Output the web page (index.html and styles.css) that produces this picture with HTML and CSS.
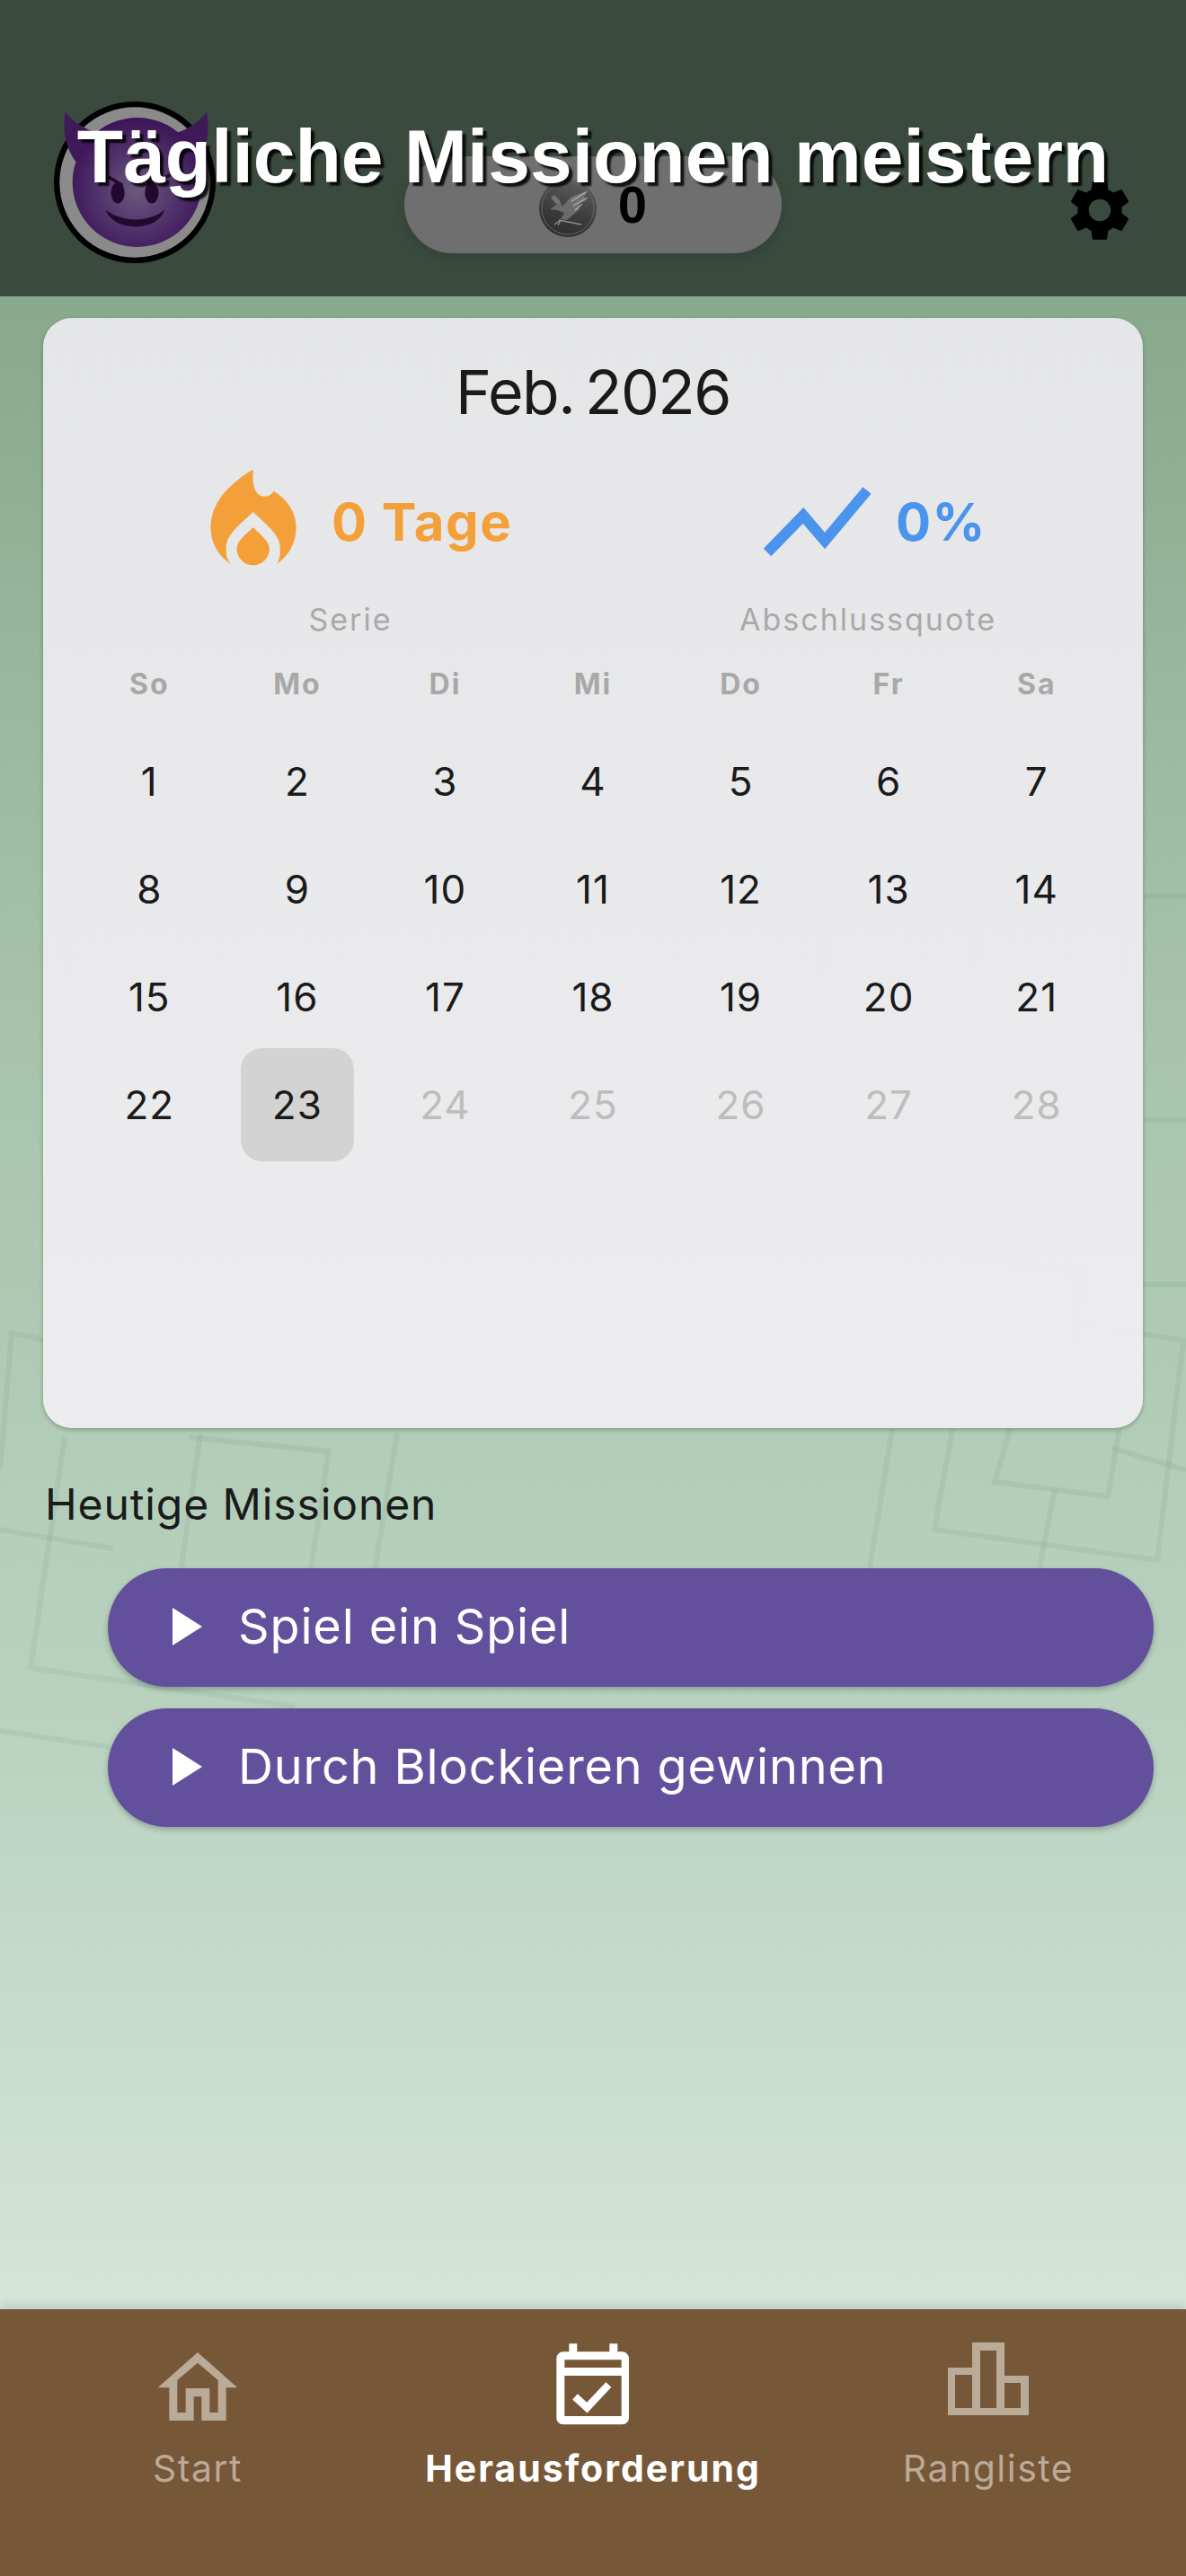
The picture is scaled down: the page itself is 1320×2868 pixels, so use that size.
FILE: index.html
```html
<!DOCTYPE html>
<html lang="de">
<head>
    <meta charset="UTF-8">
    <meta name="viewport" content="width=device-width, initial-scale=1.0">
    <title>Tägliche Missionen meistern</title>
    <link rel="stylesheet" href="styles.css">
</head>
<body>
    <header class="topbar">
        <svg class="avatar" viewBox="0 0 200 200">
            <defs>
                <radialGradient id="faceGlow" cx="50%" cy="56%" r="55%">
                    <stop offset="0" stop-color="#6d5a7c"/>
                    <stop offset="0.55" stop-color="#51336b"/>
                    <stop offset="1" stop-color="#3d1458"/>
                </radialGradient>
            </defs>
            <circle cx="100" cy="100" r="96.5" fill="#8a8a8a" stroke="#000" stroke-width="7"/>
            <path d="M14 13 C10 40 16 66 36 84 L170 84 C188 66 194 40 189 13 C178 28 158 38 146 40 C118 22 88 22 60 40 C46 38 26 28 14 13Z" fill="#3f1a58"/>
            <circle cx="103" cy="100" r="80" fill="url(#faceGlow)"/>
            <ellipse cx="79" cy="113" rx="8.5" ry="13" fill="#24082f"/>
            <ellipse cx="121" cy="113" rx="8.5" ry="13" fill="#24082f"/>
            <path d="M67 93 L85 104 M144 91 L117 102" stroke="#24082f" stroke-width="4" fill="none"/>
            <path d="M64 134 C82 150 120 150 137 134 C128 162 74 162 64 134Z" fill="#24082f"/>
        </svg>
        <div class="coins">
            <svg class="coin" viewBox="0 0 64 64">
                <defs>
                    <linearGradient id="coinShade" x1="0.7" y1="0" x2="0.4" y2="1">
                        <stop offset="0" stop-color="#5f5f5f"/>
                        <stop offset="0.6" stop-color="#3c3c3c"/>
                        <stop offset="1" stop-color="#2e2e2e"/>
                    </linearGradient>
                </defs>
                <circle cx="32" cy="32" r="32" fill="url(#coinShade)"/>
                <circle cx="32" cy="32" r="29" fill="none" stroke="#666" stroke-width="1"/>
                <path d="M12 33 L19 28 L27 29 L36 19 L55 12 L50 19 L52 23 L45 27 L45 33 L38 39 L31 45 L24 44 L28 37 L20 34Z" fill="#8f8f8f" opacity="0.55"/>
                <path d="M13 20 L17 17 L23 23 L25 29 L19 27Z" fill="#9a9a9a" opacity="0.55"/>
                <path d="M36 24 L52 14 M38 29 L54 20 M40 34 L48 27" stroke="#d0d0d0" stroke-width="1.2" opacity="0.7"/>
                <path d="M17 50 L24 45 L21 51 M22 45 L47 50" fill="none" stroke="#a5a5a5" stroke-width="1.4" opacity="0.75"/>
            </svg>
            <span class="coin-count">0</span>
        </div>
        <svg class="settings" viewBox="0 0 24 24">
            <path d="M19.14 12.94c.04-.3.06-.61.06-.94 0-.32-.02-.64-.07-.94l2.03-1.58c.18-.14.23-.41.12-.61l-1.92-3.32c-.12-.22-.37-.29-.59-.22l-2.39.96c-.5-.38-1.03-.7-1.62-.94l-.36-2.54c-.04-.24-.24-.41-.48-.41h-3.84c-.24 0-.43.17-.47.41l-.36 2.54c-.59.24-1.13.57-1.62.94l-2.39-.96c-.22-.08-.47 0-.59.22L2.74 8.87c-.12.21-.08.47.12.61l2.03 1.58c-.05.3-.09.63-.09.94s.02.64.07.94l-2.03 1.58c-.18.14-.23.41-.12.61l1.92 3.32c.12.22.37.29.59.22l2.39-.96c.5.38 1.03.7 1.62.94l.36 2.54c.05.24.24.41.48.41h3.84c.24 0 .44-.17.47-.41l.36-2.54c.59-.24 1.13-.56 1.62-.94l2.39.96c.22.08.47 0 .59-.22l1.92-3.32c.12-.22.07-.47-.12-.61l-2.01-1.58zM12 15.6c-1.98 0-3.6-1.62-3.6-3.6s1.62-3.6 3.6-3.6 3.6 1.62 3.6 3.6-1.62 3.6-3.6 3.6z"/>
        </svg>
        <h1 class="title">Tägliche Missionen meistern</h1>
    </header>

    <main class="content">
        <!-- maze lines behind the page, coordinates are page pixels -->
        <svg class="pattern" viewBox="0 330 1320 2238">
            <g fill="none" stroke="#3c5f48" stroke-opacity="0.07" stroke-width="6">
                <path d="M0 1637 L13 1484 L50 1492"/>
                <path d="M72 1600 L34 1857 L328 1900"/>
                <path d="M210 1600 L366 1616 L345 1753"/>
                <path d="M223 1596 L202 1745"/>
                <path d="M442 1596 L417 1749"/>
                <path d="M0 1703 L126 1724"/>
                <path d="M0 1927 L168 1952"/>
                <path d="M993 1591 L968 1745"/>
                <path d="M1023 1388 L1204 1417 L1188 1590"/>
                <path d="M1060 1591 L1040 1703 L1288 1737 L1317 1492 L1204 1475"/>
                <path d="M1124 1591 L1107 1650 L1233 1666 L1246 1591"/>
                <path d="M1174 1658 L1157 1745"/>
                <path d="M1237 1612 L1320 1637"/>
                <path d="M917 998 V1156 H1023"/>
                <path d="M1086 1015 V1160 H1254 V1015"/>
                <path d="M72 1040 V1200 H180"/>
                <path d="M114 1172 V1264 L210 1280"/>
                <path d="M165 1130 L258 1135 L250 1290"/>
                <path d="M208 1023 H1228"/>
                <path d="M1271 998 H1320 M1271 1247 H1320 M1271 1430 H1320"/>
            </g>
        </svg>

        <section class="calendar">
            <h2 class="month">Feb. 2026</h2>
            <div class="stats">
                <div class="stat stat-streak">
                    <div class="stat-value">
                        <svg class="flame" viewBox="100 65 292 327">
                            <path d="M245 67 C245 90 240 130 262 150 C280 165 305 158 315 140 C360 170 390 210 390 262 C390 315 365 360 325 385 C335 370 338 350 335 320 C330 280 270 235 245 210 C220 235 160 280 155 320 C152 350 155 370 170 385 C125 360 102 310 102 262 C102 170 180 105 245 67Z"/>
                            <path d="M245 262 C265 285 300 305 300 335 C300 365 275 390 245 390 C215 390 190 365 190 335 C190 305 225 285 245 262Z"/>
                        </svg>
                        <span>0 Tage</span>
                    </div>
                    <div class="stat-label">Serie</div>
                </div>
                <div class="stat stat-rate">
                    <div class="stat-value">
                        <svg class="trend" viewBox="0 0 120 80">
                            <path d="M5 74 L45 33 L69 61 L116 5"/>
                        </svg>
                        <span>0%</span>
                    </div>
                    <div class="stat-label">Abschlussquote</div>
                </div>
            </div>
            <div class="weekdays">
                <span>So</span><span>Mo</span><span>Di</span><span>Mi</span><span>Do</span><span>Fr</span><span>Sa</span>
            </div>
            <div class="days">
                <span>1</span><span>2</span><span>3</span><span>4</span><span>5</span><span>6</span><span>7</span>
                <span>8</span><span>9</span><span>10</span><span>11</span><span>12</span><span>13</span><span>14</span>
                <span>15</span><span>16</span><span>17</span><span>18</span><span>19</span><span>20</span><span>21</span>
                <span>22</span><span class="today">23</span><span class="future">24</span><span class="future">25</span><span class="future">26</span><span class="future">27</span><span class="future">28</span>
            </div>
        </section>

        <h3 class="missions-title">Heutige Missionen</h3>
        <div class="missions">
            <button class="mission"><span class="play"></span>Spiel ein Spiel</button>
            <button class="mission"><span class="play"></span>Durch Blockieren gewinnen</button>
        </div>
    </main>

    <nav class="tabbar">
        <div class="tab">
            <svg class="tab-icon" viewBox="0 0 360 360">
                <path fill-rule="evenodd" d="M180 87 L313 205 L275 205 L275 315 L193 315 L193 235 L167 235 L167 315 L85 315 L85 205 L47 205Z M180 122 L112 180 L112 288 L140 288 L140 207 L220 207 L220 288 L248 288 L248 180Z"/>
            </svg>
            <span>Start</span>
        </div>
        <div class="tab active">
            <svg class="tab-icon" viewBox="0 0 360 360">
                <path fill-rule="evenodd" d="M100 58 H127 V85 H235 V58 H262 V85 H278 A22 22 0 0 1 300 107 V306 A22 22 0 0 1 278 328 H80 A22 22 0 0 1 58 306 V107 A22 22 0 0 1 80 85 H100Z M85 112 V138 H275 V112Z M85 165 V300 H275 V165Z"/>
                <path d="M120 235 L160 272 L232 195" fill="none" stroke="#fff" stroke-width="25"/>
            </svg>
            <span>Herausforderung</span>
        </div>
        <div class="tab">
            <svg class="tab-icon" viewBox="0 0 120 120">
                <path fill-rule="evenodd" d="M42 18 H78 V55 H105 V99 H15 V46 H42Z M51 27 V91 H69 V27Z M23 54 V91 H42 V54Z M78 63 V91 H96 V63Z"/>
            </svg>
            <span>Rangliste</span>
        </div>
    </nav>
</body>
</html>
```

FILE: styles.css
```css
* {
    box-sizing: border-box;
    margin: 0;
}

body {
    display: flex;
    flex-direction: column;
    width: 1320px;
    height: 2868px;
    overflow: hidden;
    font-family: "Inter", "Liberation Sans", sans-serif;
    color: #1a1a1a;
    background: #88a98c;
}

/* top bar */
.topbar {
    position: relative;
    display: grid;
    grid-template-columns: 1fr auto 1fr;
    align-items: start;
    height: 330px;
    padding: 113px 60px 0;
    background: #3a4a3e;
}

.avatar {
    width: 180px;
    height: 180px;
    overflow: visible;
}

.coins {
    display: flex;
    align-items: center;
    justify-content: center;
    gap: 24px;
    width: 420px;
    height: 108px;
    margin-top: 61px;
    border-radius: 54px;
    background: #6f6f6f;
    box-shadow: 0 4px 14px rgba(0, 0, 0, 0.12);
}

.coin {
    width: 64px;
    height: 64px;
    margin-top: 8px;
}

.coin-count {
    font-family: "Liberation Sans", sans-serif;
    font-size: 58px;
    font-weight: 700;
    line-height: 40px;
    color: #000;
}

.settings {
    justify-self: end;
    width: 82px;
    height: 82px;
    margin: 80px -5px 0 0;
}

.title {
    position: absolute;
    top: 140px;
    left: 0;
    width: 100%;
    font-family: "Liberation Sans", sans-serif;
    font-size: 84px;
    font-weight: 700;
    line-height: 68px;
    text-align: center;
    color: #fff;
    text-shadow: 4px 4px 2px rgba(0, 0, 0, 0.85);
}

/* content */
.content {
    position: relative;
    flex: 1;
    padding: 24px 36px 0 48px;
    background: linear-gradient(180deg, #88a98c 0%, #a6c3aa 35%, #b8d2bf 70%, #d4e5da 100%);
}

.pattern {
    position: absolute;
    top: 0;
    left: 0;
    width: 1320px;
    height: 2238px;
}

.calendar {
    position: relative;
    height: 1236px;
    margin-right: 12px;
    padding: 41px 36px 0;
    border-radius: 32px;
    background: linear-gradient(180deg, rgba(237, 235, 239, 0.92), rgba(241, 239, 243, 0.92));
    box-shadow: 0 2px 5px rgba(0, 0, 0, 0.25);
}

.month {
    font-size: 68px;
    font-weight: 400;
    line-height: 82px;
    letter-spacing: -1.5px;
    word-spacing: -6px;
    text-align: center;
}

.stats {
    display: flex;
    gap: 246px;
    margin: 45px 0 0 126px;
}

.stat-streak {
    width: 360px;
    color: #f4a03a;
}

.stat-rate {
    width: 300px;
    color: #4a94ee;
}

.stat-value {
    display: flex;
    align-items: center;
    height: 108px;
    font-size: 58px;
    font-weight: 700;
    letter-spacing: 1.5px;
    white-space: nowrap;
}

.stat-value span {
    margin-top: 10px;
}

.stat-streak .stat-value {
    gap: 38px;
    padding-left: 23px;
}

.stat-rate .stat-value {
    gap: 28px;
    padding-left: 33px;
}

.flame {
    flex: none;
    width: 98px;
    height: 108px;
    fill: currentColor;
}

.trend {
    flex: none;
    width: 120px;
    height: 80px;
    margin-top: 10px;
    fill: none;
    stroke: currentColor;
    stroke-width: 12;
}

.stat-label {
    margin-top: 40px;
    font-size: 34px;
    line-height: 40px;
    letter-spacing: 2px;
    text-align: center;
    color: #a9a9a9;
}

.weekdays,
.days {
    display: grid;
    grid-template-columns: repeat(7, 1fr);
    justify-items: center;
    align-items: center;
}

.weekdays {
    margin-top: 32px;
    font-size: 32px;
    font-weight: 700;
    line-height: 40px;
    letter-spacing: 2px;
    color: #a8a8a8;
}

.days {
    grid-auto-rows: 120px;
    margin-top: 28px;
    font-size: 44px;
    letter-spacing: 1px;
    color: #1a1a1a;
}

.days span {
    display: flex;
    align-items: center;
    justify-content: center;
    width: 126px;
    height: 126px;
}

.days .today {
    border-radius: 24px;
    background: #d3d3d3;
}

.days .future {
    color: #bdbdbd;
}

.missions-title {
    position: relative;
    margin: 55px 0 0 2px;
    font-size: 48px;
    font-weight: 400;
    line-height: 60px;
    letter-spacing: 0.9px;
}

.missions {
    position: relative;
    display: flex;
    flex-direction: column;
    gap: 24px;
    margin: 41px 0 0 72px;
}

.mission {
    display: flex;
    align-items: center;
    gap: 40px;
    height: 132px;
    padding: 0 0 3px 72px;
    border: 0;
    border-radius: 66px;
    font-family: inherit;
    font-size: 54px;
    letter-spacing: 0.85px;
    color: #fff;
    background: #63509d;
    box-shadow: 0 3px 6px rgba(0, 0, 0, 0.25);
}

.play {
    width: 0;
    height: 0;
    border-top: 21px solid transparent;
    border-bottom: 21px solid transparent;
    border-left: 33px solid #fff;
}

/* bottom tabs */
.tabbar {
    position: relative;
    display: grid;
    grid-template-columns: repeat(3, 1fr);
    height: 297px;
    padding-top: 19px;
    background: #765737;
    box-shadow: 0 -4px 10px rgba(0, 0, 0, 0.12);
}

.tab {
    display: flex;
    flex-direction: column;
    align-items: center;
    font-size: 41px;
    line-height: 50px;
    letter-spacing: 1.5px;
    color: #baaa98;
}

.tab-icon {
    width: 120px;
    height: 120px;
    margin-bottom: 13px;
    fill: currentColor;
}

.tab.active {
    font-weight: 700;
    letter-spacing: 2px;
    color: #fff;
}
```
